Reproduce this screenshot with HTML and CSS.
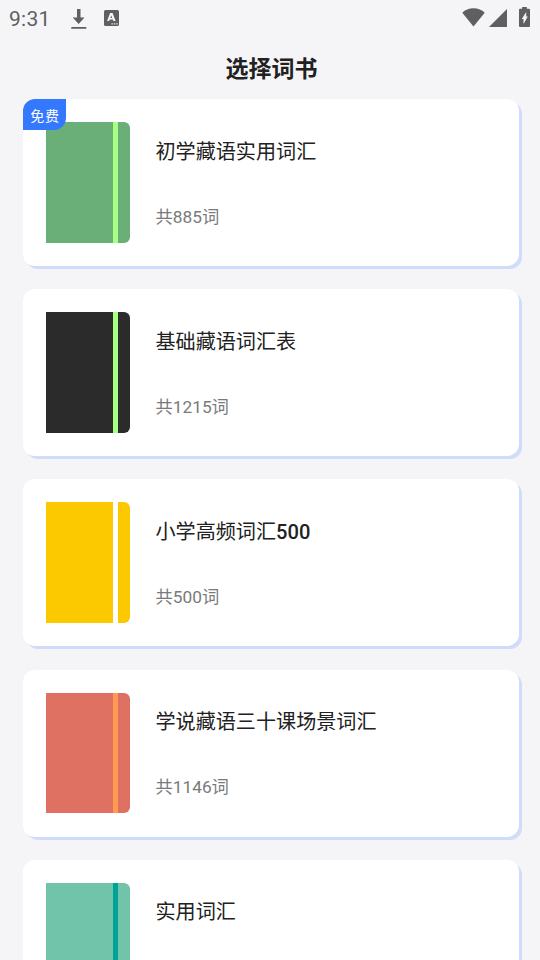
FILE: index.html
```html
<!DOCTYPE html>
<html lang="zh-CN">
<head>
<meta charset="utf-8">
<title>选择词书</title>
<link rel="stylesheet" href="styles.css">
</head>
<body>
<div class="status">
  <span class="clock">9:31</span>
  <svg class="download" width="16" height="21" viewBox="0 0 16 21"><path d="M6 0h3.500v8.500h4L7.700 15l-6-6.500H6zM.3 18h15v1.800H.3z"/></svg>
  <svg class="keyboard" width="15" height="16" viewBox="0 0 15 16"><rect width="15" height="16" rx="1.500"/><path class="cut" fill-rule="evenodd" d="M6.100 3h2.500l3 8H9.400l-.5-1.600H5.800L5.200 11H3.100zM7.300 5.400l-.9 2.500h1.800zM7.500 13.200h1.300v1.300H7.500zm2.400 0h1.300v1.300H9.900zm2.400 0h1.300v1.300h-1.300z"/></svg>
  <span class="spacer"></span>
  <svg class="wifi" width="23" height="20" viewBox="0 0 23 20"><path d="M11.500 18.500.3 4.800Q4.500.3 11.500.3t11.200 4.500z"/></svg>
  <svg class="signal" width="18" height="18" viewBox="0 0 18 18"><path d="M18 0v18H0z"/></svg>
  <svg class="battery" width="11" height="20" viewBox="0 0 11 20"><path d="M3.200 0h4.600v1.800H10q1 0 1 1V19q0 1-1 1H1q-1 0-1-1V2.800q0-1 1-1h2.200z"/><path class="cut" d="M7.200 5v4.500h1.600L4.500 17v-5H2.800z"/></svg>
</div>
<h1 class="title">选择词书</h1>
<main class="books">
  <article class="card">
    <span class="badge">免费</span>
    <div class="cover green"><i class="band"></i></div>
    <div class="info"><h2 class="name">初学藏语实用词汇</h2><p class="count">共885词</p></div>
  </article>
  <article class="card">
    <div class="cover black"><i class="band"></i></div>
    <div class="info"><h2 class="name">基础藏语词汇表</h2><p class="count">共1215词</p></div>
  </article>
  <article class="card">
    <div class="cover yellow"><i class="band"></i></div>
    <div class="info"><h2 class="name">小学高频词汇<span class="digits">500</span></h2><p class="count">共500词</p></div>
  </article>
  <article class="card">
    <div class="cover red"><i class="band"></i></div>
    <div class="info"><h2 class="name">学说藏语三十课场景词汇</h2><p class="count">共1146词</p></div>
  </article>
  <article class="card">
    <div class="cover teal"><i class="band"></i></div>
    <div class="info"><h2 class="name">实用词汇</h2></div>
  </article>
</main>
</body>
</html>
```

FILE: styles.css
```css
* { box-sizing: border-box; }
html, body { height: 100%; }
body {
  margin: 0;
  height: 960px;
  overflow: hidden;
  background: #f5f5f8;
  color: #212121;
  font-family: Roboto, "Noto Sans CJK SC", sans-serif;
}
h1, h2, p { margin: 0; }
.status {
  display: flex;
  align-items: flex-start;
  height: 38px;
  padding: 0 10px 0 9px;
  fill: #5f5f5f;
  color: #5f5f5f;
}
.status svg { flex: none; }
.cut { fill: #f5f5f8; }
.clock { width: 62px; padding-top: 7px; font-size: 21px; line-height: 24px; letter-spacing: 0.3px; }
.download { margin-top: 8.5px; }
.keyboard { margin: 10px 0 0 17px; }
.spacer { flex: 1; }
.wifi { margin-top: 8px; }
.signal { margin: 9px 12px 0 4px; }
.battery { margin-top: 7px; }
.title {
  height: 60.85px;
  text-align: center;
  font-size: 23px;
  font-weight: 700;
  line-height: 63px;
  padding-left: 3px;
}
.books { display: flex; flex-direction: column; gap: 23.22px; padding: 0 21px 0 23px; }
.card {
  position: relative;
  flex: none;
  display: flex;
  height: 167px;
  padding: 23px;
  border-radius: 12px;
  background: #fff;
  box-shadow: 3px 3px 0 #d0dcfa;
}
.badge {
  position: absolute;
  left: 0;
  top: 0;
  width: 43px;
  height: 31px;
  padding-left: 1px;
  border-radius: 12px 0 12px 0;
  background: #3478ff;
  color: #fff;
  font-size: 14px;
  letter-spacing: 0.7px;
  line-height: 34px;
  text-align: center;
  z-index: 1;
}
.cover {
  display: flex;
  justify-content: flex-end;
  width: 84.3px;
  height: 120.8px;
  padding-right: 12.3px;
  border-radius: 0 6px 6px 0;
}
.band { width: 5.4px; }
.green { background: #6aaf78; }
.green .band { background: #a7ff83; }
.black { background: #2b2b2b; }
.black .band { background: #a7ff83; }
.yellow { background: #fcc800; }
.yellow .band { background: #fff; }
.red { background: #df7162; }
.red .band { background: #ff9a52; }
.teal { background: #71c3aa; }
.teal .band { background: #00a495; }
.info { padding: 13.78px 0 0 25.2px; }
.name { font-size: 20.1px; font-weight: 400; line-height: 32px; }
.digits { font-weight: 500; }
.count { margin-top: 35.92px; color: #7a7a7a; font-size: 17.3px; line-height: 26px; }
```
